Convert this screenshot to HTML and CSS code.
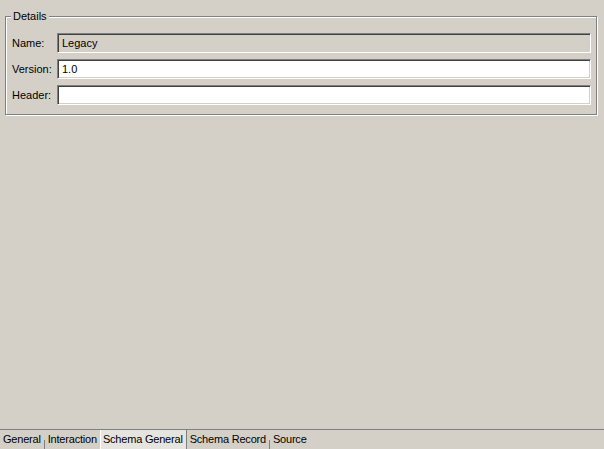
FILE: index.html
```html
<!DOCTYPE html>
<html>
<head>
<meta charset="utf-8">
<link rel="stylesheet" href="styles.css">
</head>
<body>
<div class="window">
  <div class="content">
    <fieldset class="group">
      <legend class="group-title">Details</legend>
      <div class="form">
        <label class="label">Name:</label>
        <div class="field readonly">Legacy</div>
        <label class="label">Version:</label>
        <div class="field">1.0</div>
        <label class="label">Header:</label>
        <div class="field"></div>
      </div>
    </fieldset>
  </div>
  <div class="tabbar">
    <div class="tab">General</div>
    <span class="sep"></span>
    <div class="tab">Interaction</div>
    <div class="tab active">Schema General</div>
    <div class="tab">Schema Record</div>
    <span class="sep"></span>
    <div class="tab">Source</div>
  </div>
</div>
</body>
</html>
```

FILE: styles.css
```css
html, body {
  margin: 0;
  padding: 0;
  background: #d4d0c8;
}
body {
  font-family: "Liberation Sans", Arial, sans-serif;
  font-size: 11px;
  color: #000;
}
.window {
  width: 604px;
  height: 449px;
  display: flex;
  flex-direction: column;
  overflow: hidden;
}
.content {
  flex: 1;
  min-height: 0;
}
.group {
  margin: 10px 7px 0 5px;
  padding: 10px 5px 9px 6px;
  border: 1px solid #808080;
  box-shadow: 1px 1px 0 #fff, inset 1px 1px 0 #fff;
  min-width: 0;
}
.group-title {
  padding: 0 2px;
  margin-left: -1px;
  line-height: 13px;
  background: #d4d0c8;
}
.form {
  display: grid;
  grid-template-columns: 45px 1fr;
  grid-auto-rows: 20px;
  row-gap: 6px;
  align-items: center;
}
.label {
  line-height: 20px;
}
.field {
  height: 20px;
  box-sizing: border-box;
  border: 1px solid;
  border-color: #808080 #fff #fff #808080;
  box-shadow: inset 1px 1px 0 #404040, inset -1px -1px 0 #d4d0c8;
  background: #fff;
  padding: 0 4px;
  line-height: 18px;
}
.field.readonly {
  background: #d4d0c8;
}
.tabbar {
  height: 20px;
  box-sizing: border-box;
  border-top: 1px solid #808080;
  display: flex;
  align-items: stretch;
}
.tab {
  padding: 0 3px;
  line-height: 19px;
  white-space: nowrap;
  letter-spacing: -0.2px;
}
.tab.active {
  background: #e6e4df;
  border-left: 1px solid #fff;
  border-right: 1px solid #808080;
  padding: 0 3px 0 2px;
}
.sep {
  width: 1px;
  height: 9px;
  align-self: flex-end;
  background: #808080;
}
```
